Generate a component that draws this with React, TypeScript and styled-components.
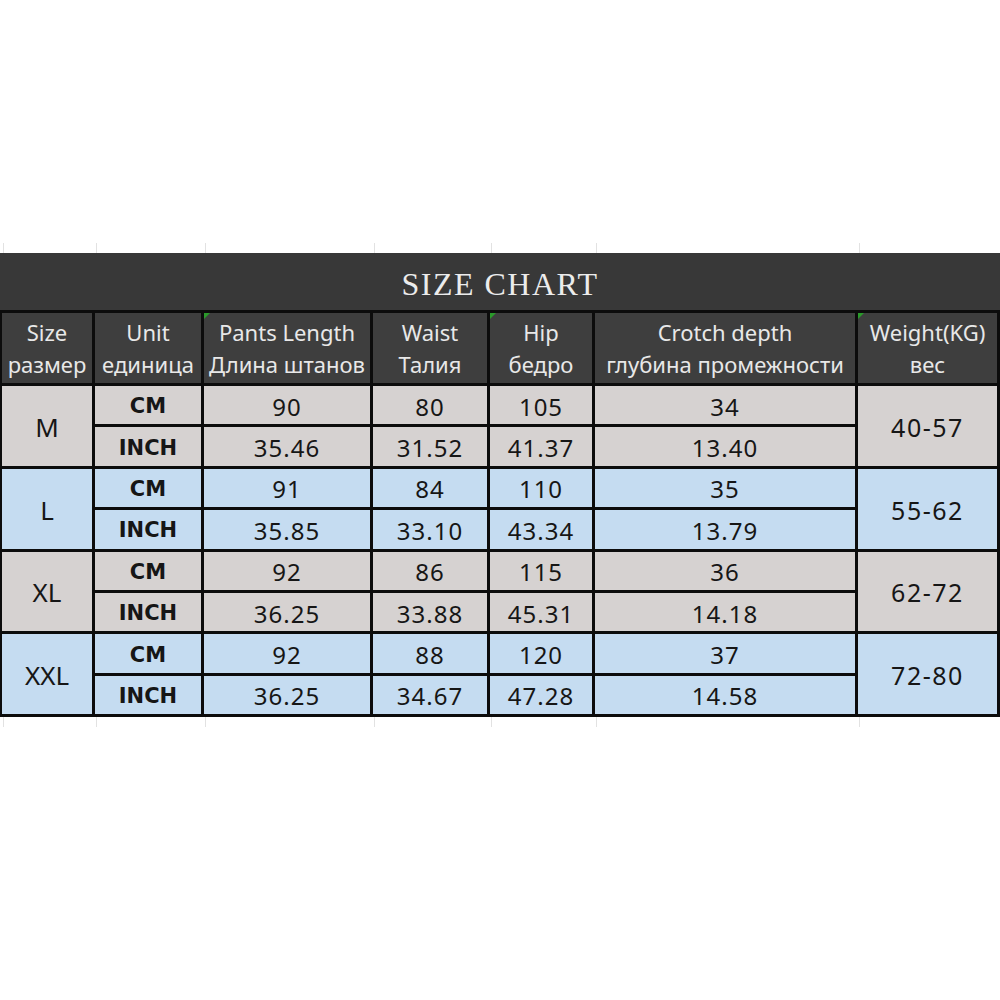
import React from "react";
import styled, { createGlobalStyle } from "styled-components";

const rows = [
  { size: "M", tone: "gray", weight: "40-57", cm: ["90", "80", "105", "34"], inch: ["35.46", "31.52", "41.37", "13.40"] },
  { size: "L", tone: "blue", weight: "55-62", cm: ["91", "84", "110", "35"], inch: ["35.85", "33.10", "43.34", "13.79"] },
  { size: "XL", tone: "gray", weight: "62-72", cm: ["92", "86", "115", "36"], inch: ["36.25", "33.88", "45.31", "14.18"] },
  { size: "XXL", tone: "blue", weight: "72-80", cm: ["92", "88", "120", "37"], inch: ["36.25", "34.67", "47.28", "14.58"] },
];

const heads = [
  { en: "Size", ru: "размер" },
  { en: "Unit", ru: "единица" },
  { en: "Pants Length", ru: "Длина штанов", mark: true },
  { en: "Waist", ru: "Талия" },
  { en: "Hip", ru: "бедро", mark: true },
  { en: "Crotch depth", ru: "глубина промежности" },
  { en: "Weight(KG)", ru: "вес", mark: true },
];

const cols = "90px 106px 166px 114px 102px 260px 139px";

export default function App() {
  return (
    <>
      <Global />
      <Page>
        <Ticks>
          {heads.map((h) => (
            <Tick key={h.en} />
          ))}
        </Ticks>
        <Title>SIZE CHART</Title>
        <Grid>
          {heads.map((h) => (
            <Head key={h.en} $mark={h.mark}>
              <span>{h.en}</span>
              <span>{h.ru}</span>
            </Head>
          ))}
          {rows.map((r) => (
            <React.Fragment key={r.size}>
              <SizeCell $tone={r.tone}>{r.size}</SizeCell>
              <Unit $tone={r.tone}>CM</Unit>
              {r.cm.map((v, i) => (
                <Cell key={"c" + i} $tone={r.tone}>{v}</Cell>
              ))}
              <Weight $tone={r.tone}>{r.weight}</Weight>
              <Unit $tone={r.tone}>INCH</Unit>
              {r.inch.map((v, i) => (
                <Cell key={"i" + i} $tone={r.tone}>{v}</Cell>
              ))}
            </React.Fragment>
          ))}
        </Grid>
        <Ticks>
          {heads.map((h) => (
            <Tick key={h.en} />
          ))}
        </Ticks>
      </Page>
    </>
  );
}

const Global = createGlobalStyle`
  body {
    margin: 0;
    background: #ffffff;
    font-family: "Noto Sans", "Open Sans", sans-serif;
  }
`;

const Page = styled.div`
  width: 1000px;
  height: 1000px;
  padding-top: 243px;
  box-sizing: border-box;
  background: #ffffff;
`;

const Ticks = styled.div`
  display: grid;
  grid-template-columns: 2px ${cols};
  column-gap: 3px;
  height: 10px;
`;

const Tick = styled.div`
  border-right: 1px solid #e2e2e2;
  margin-right: -2px;
`;

const Title = styled.div`
  height: 57px;
  background: #383838;
  color: #ececec;
  display: flex;
  align-items: center;
  justify-content: center;
  font-family: "Liberation Serif", serif;
  font-size: 32px;
  letter-spacing: 1.5px;
  padding-top: 6px;
  box-sizing: border-box;
`;

const Grid = styled.div`
  display: grid;
  grid-template-columns: ${cols};
  grid-template-rows: 70px repeat(8, 38.4px);
  gap: 3px;
  padding: 3px 3px 3px 2px;
  background: #0c0c0c;
`;

const toneBg = (t: string) => (t === "blue" ? "#c5dcf1" : "#d6d2d1");

const Head = styled.div<{ $mark?: boolean }>`
  position: relative;
  background: #3e3e3e;
  color: #e8e8e8;
  display: flex;
  flex-direction: column;
  align-items: center;
  justify-content: center;
  font-size: 22px;
  line-height: 32px;
  white-space: nowrap;
  &::before {
    content: "";
    display: ${(p) => (p.$mark ? "block" : "none")};
    position: absolute;
    left: 0;
    top: 0;
    border-top: 6px solid #2a9a2a;
    border-right: 6px solid transparent;
  }
`;

const Cell = styled.div<{ $tone: string }>`
  background: ${(p) => toneBg(p.$tone)};
  color: #161616;
  display: flex;
  align-items: center;
  justify-content: center;
  font-size: 24px;
  letter-spacing: 1px;
  padding-top: 2px;
`;

const Unit = styled(Cell)`
  font-family: "DejaVu Sans", sans-serif;
  font-weight: bold;
  font-size: 21px;
  letter-spacing: 0;
`;

const SizeCell = styled(Cell)`
  grid-row: span 2;
  font-size: 26px;
  letter-spacing: 0;
`;

const Weight = styled(Cell)`
  grid-row: span 2;
  font-size: 25px;
  letter-spacing: 1.5px;
`;
